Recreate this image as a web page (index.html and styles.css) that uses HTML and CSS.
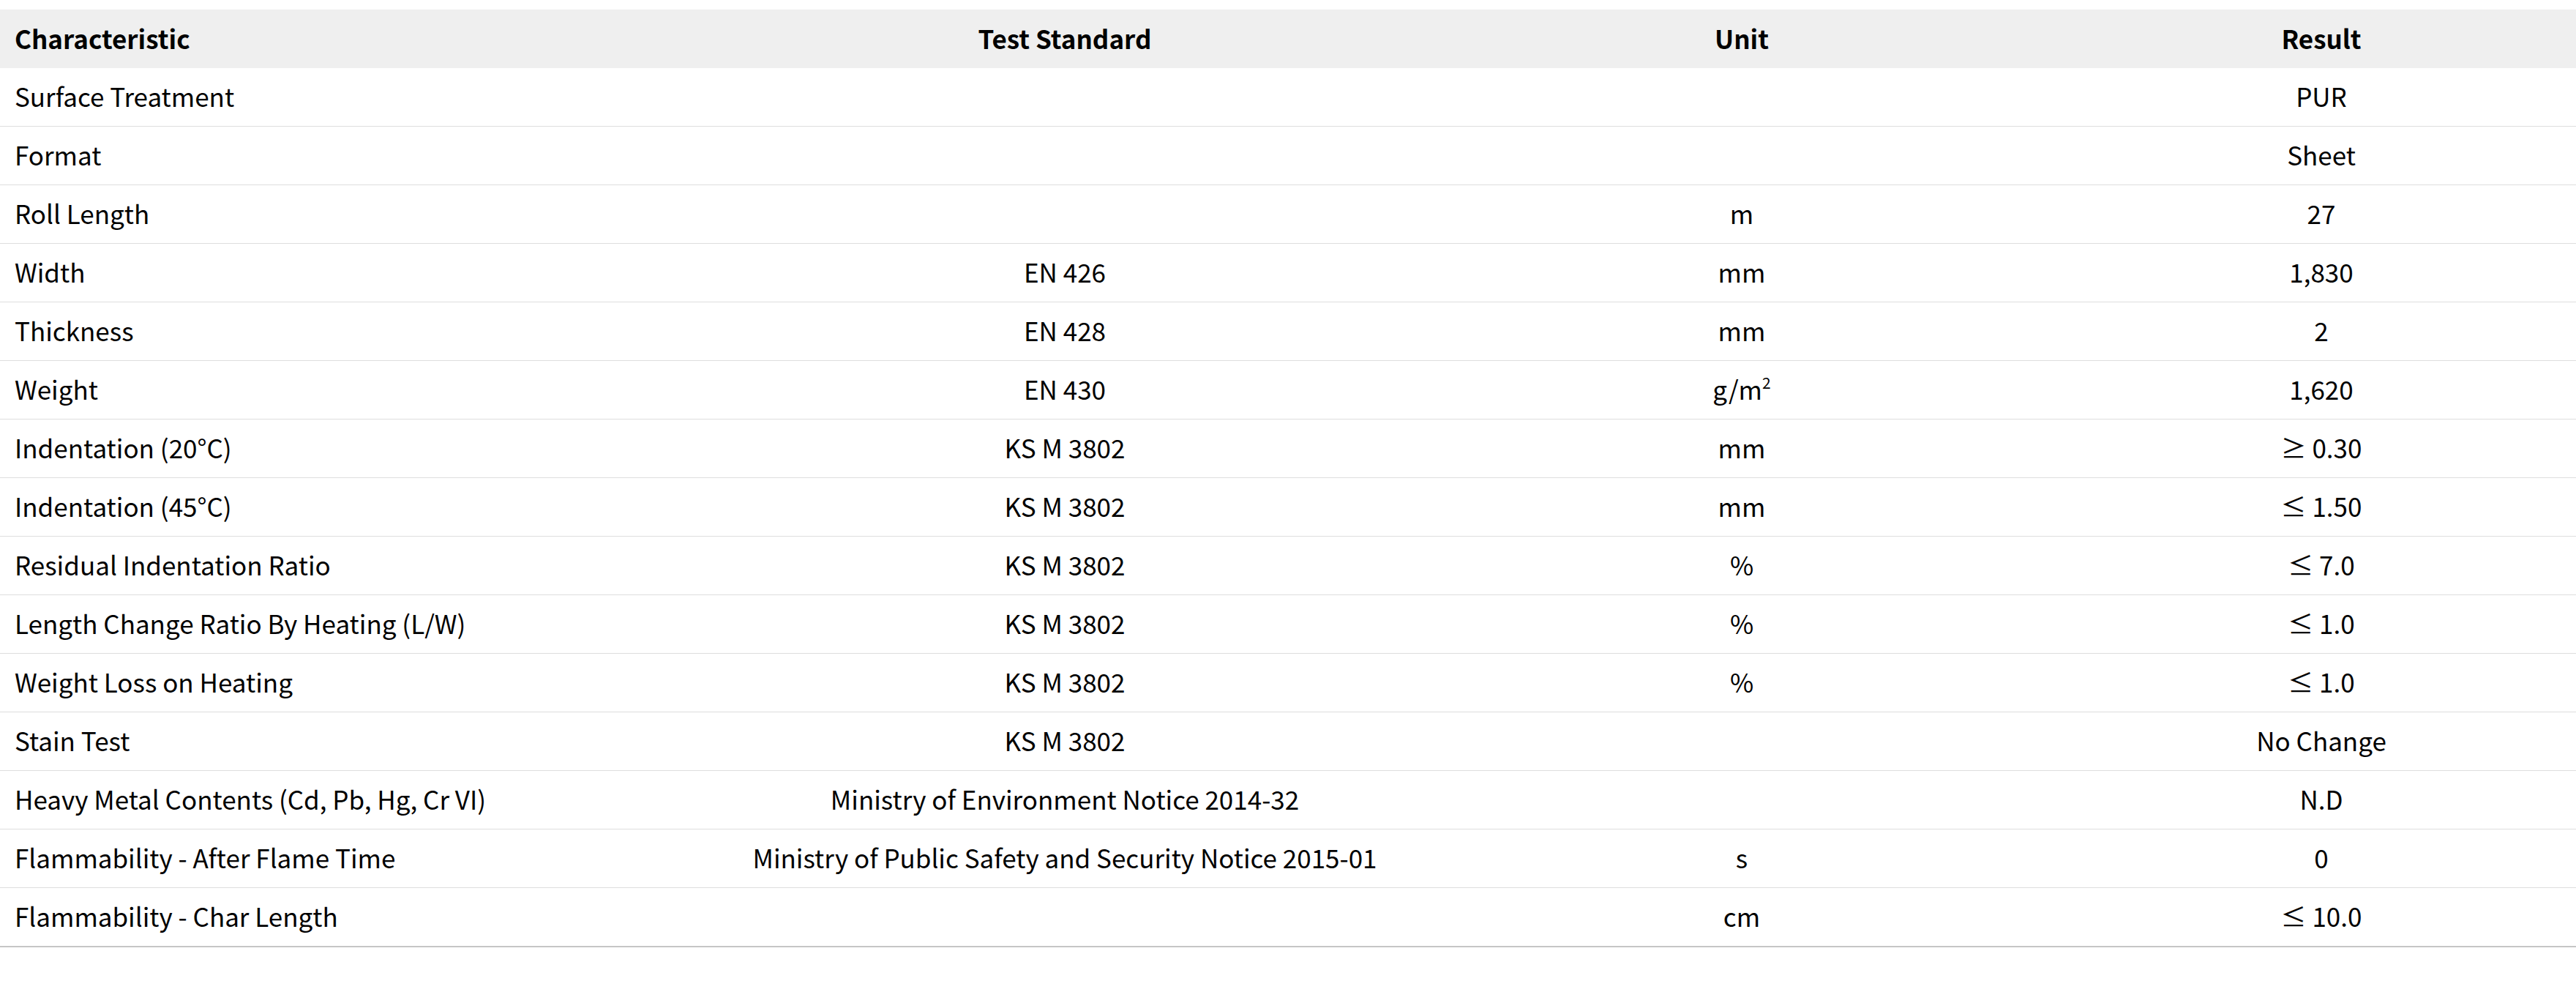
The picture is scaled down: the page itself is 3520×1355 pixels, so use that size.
FILE: index.html
```html
<!DOCTYPE html>
<html lang="en">
<head>
<meta charset="utf-8">
<title>Specifications</title>
<link rel="stylesheet" href="styles.css">
</head>
<body>
<div class="wrap">
<table class="spec">
  <colgroup>
    <col class="c1"><col class="c2"><col class="c3"><col class="c4">
  </colgroup>
  <thead>
    <tr><th class="left">Characteristic</th><th>Test Standard</th><th>Unit</th><th>Result</th></tr>
  </thead>
  <tbody>
    <tr><td class="left">Surface Treatment</td><td></td><td></td><td>PUR</td></tr>
    <tr><td class="left">Format</td><td></td><td></td><td>Sheet</td></tr>
    <tr><td class="left">Roll Length</td><td></td><td>m</td><td>27</td></tr>
    <tr><td class="left">Width</td><td>EN 426</td><td>mm</td><td>1,830</td></tr>
    <tr><td class="left">Thickness</td><td>EN 428</td><td>mm</td><td>2</td></tr>
    <tr><td class="left">Weight</td><td>EN 430</td><td>g/m<sup>2</sup></td><td>1,620</td></tr>
    <tr><td class="left">Indentation (20°C)</td><td>KS M 3802</td><td>mm</td><td>≥ 0.30</td></tr>
    <tr><td class="left">Indentation (45°C)</td><td>KS M 3802</td><td>mm</td><td>≤ 1.50</td></tr>
    <tr><td class="left">Residual Indentation Ratio</td><td>KS M 3802</td><td>%</td><td>≤ 7.0</td></tr>
    <tr><td class="left">Length Change Ratio By Heating (L/W)</td><td>KS M 3802</td><td>%</td><td>≤ 1.0</td></tr>
    <tr><td class="left">Weight Loss on Heating</td><td>KS M 3802</td><td>%</td><td>≤ 1.0</td></tr>
    <tr><td class="left">Stain Test</td><td>KS M 3802</td><td></td><td>No Change</td></tr>
    <tr><td class="left">Heavy Metal Contents (Cd, Pb, Hg, Cr VI)</td><td>Ministry of Environment Notice 2014-32</td><td></td><td>N.D</td></tr>
    <tr><td class="left">Flammability - After Flame Time</td><td>Ministry of Public Safety and Security Notice 2015-01</td><td>s</td><td>0</td></tr>
    <tr><td class="left">Flammability - Char Length</td><td></td><td>cm</td><td>≤ 10.0</td></tr>
  </tbody>
</table>
</div>
</body>
</html>
```

FILE: styles.css
```css
html, body {
  margin: 0;
  padding: 0;
  background: #ffffff;
}
.wrap {
  padding-top: 13px;
}
.spec {
  width: 3520px;
  border-collapse: collapse;
  table-layout: fixed;
  font-family: "Noto Sans CJK KR", "Noto Sans", sans-serif;
  font-size: 35px;
  color: #000;
  border-bottom: 2px solid #c6c6c6;
}
.c1 { width: 974px; }
.c2 { width: 962px; }
.c3 { width: 888px; }
.c4 { width: 696px; }
.spec th,
.spec td {
  padding: 0 20px 4px;
  text-align: center;
  vertical-align: middle;
  white-space: nowrap;
  line-height: 1;
}
.spec th {
  height: 76px;
  background: #efefef;
  font-weight: 700;
}
.spec td {
  height: 75px;
  font-weight: 400;
  border-top: 1px solid #dedede;
}
.spec tbody tr:first-child td {
  border-top: none;
}
.spec .left {
  text-align: left;
}
.spec sup {
  font-size: 0.6em;
  line-height: 0;
  vertical-align: 0.7em;
}
```
